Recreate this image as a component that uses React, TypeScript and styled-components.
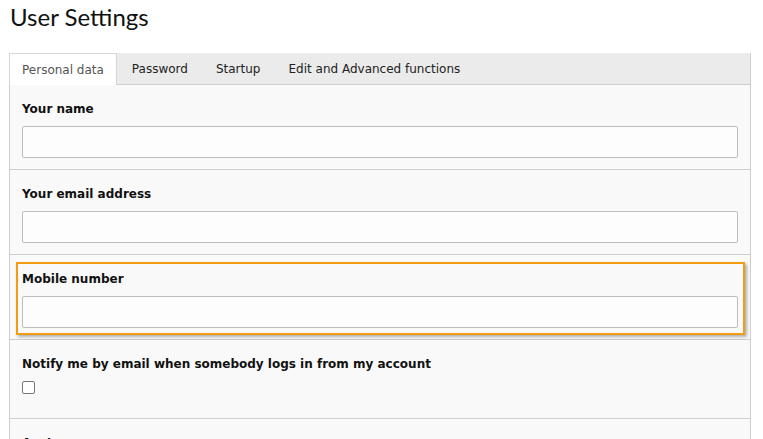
import React from "react";
import styled, { createGlobalStyle } from "styled-components";

const Global = createGlobalStyle`
  html, body { margin: 0; padding: 0; background: #fff; overflow: hidden; }
  body { font-family: "DejaVu Sans", Verdana, sans-serif; color: #000; }
  * { box-sizing: border-box; }
`;

const Page = styled.div`
  padding: 0 0 0 9px;
`;

const Title = styled.h1`
  margin: 0;
  padding: 0 0 0 1px;
  font-family: Lato, "Open Sans", sans-serif;
  font-weight: 400;
  font-size: 24px;
  line-height: 34px;
  height: 53px;
  color: #111;
`;

const Panel = styled.div`
  width: 742px;
  border: 1px solid #cfcfcf;
  border-top: none;
  background: #f9f9f9;
`;

const TabBar = styled.div`
  display: flex;
  height: 32px;
  background: #ebebeb;
  border-bottom: 1px solid #cfcfcf;
`;

const Tab = styled.div<{ $active?: boolean }>`
  display: flex;
  align-items: center;
  font-size: 12px;
  color: ${(p) => (p.$active ? "#555" : "#222")};
  padding: 0 14px;
  height: ${(p) => (p.$active ? "32px" : "31px")};
  ${(p) =>
    p.$active &&
    `
    margin-left: -1px;
    padding: 0 12px 0 12px;
    margin-right: 1px;
    background: #fff;
    border: 1px solid #d6d6d6;
    border-bottom: none;
  `}
`;

const Row = styled.div<{ $highlight?: boolean }>`
  border-bottom: 1px solid #cfcfcf;
  padding: ${(p) => (p.$highlight ? "7px 5px 4px 6px" : "15px 12px 11px 12px")};
`;

const Highlight = styled.div`
  border: 2px solid #f39c12;
  box-shadow: 2px 2px 3px rgba(0, 0, 0, 0.3);
  padding: 6px 5px 5px 4px;
`;

const Label = styled.div`
  font-weight: 700;
  font-size: 12px;
  line-height: 18px;
  color: #111;
  margin-bottom: 8px;
`;

const Input = styled.input`
  display: block;
  width: 100%;
  height: 32px;
  border: 1px solid #bdbdbd;
  border-radius: 2px;
  background: #fdfdfd;
  outline: none;
  margin: 0;
`;

const Check = styled.input`
  appearance: none;
  display: block;
  width: 13px;
  height: 13px;
  margin: 0 0 13px 0;
  border: 1px solid #767676;
  border-radius: 2px;
  background: #fff;
`;

export default function App() {
  return (
    <>
      <Global />
      <Page>
        <Title>User Settings</Title>
        <Panel>
          <TabBar>
            <Tab $active>Personal data</Tab>
            <Tab>Password</Tab>
            <Tab>Startup</Tab>
            <Tab>Edit and Advanced functions</Tab>
          </TabBar>
          <Row>
            <Label>Your name</Label>
            <Input type="text" />
          </Row>
          <Row>
            <Label>Your email address</Label>
            <Input type="email" />
          </Row>
          <Row $highlight>
            <Highlight>
              <Label>Mobile number</Label>
              <Input type="tel" />
            </Highlight>
          </Row>
          <Row>
            <Label>Notify me by email when somebody logs in from my account</Label>
            <Check type="checkbox" />
          </Row>
          <Row>
            <Label>Avatar</Label>
            <Input type="text" />
          </Row>
        </Panel>
      </Page>
    </>
  );
}
